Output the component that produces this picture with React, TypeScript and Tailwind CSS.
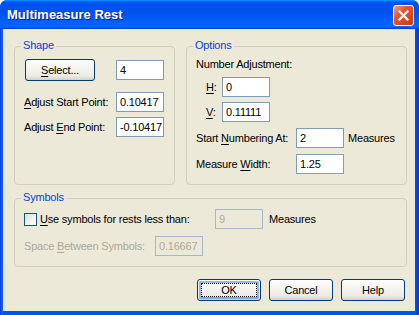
import React from "react";

function U({ children }: { children: React.ReactNode }) {
  return <span className="underline underline-offset-[2px] decoration-[1px]">{children}</span>;
}

function Field({ value, disabled = false, className = "" }: { value: string; disabled?: boolean; className?: string }) {
  return (
    <div
      className={`h-[20px] w-[48px] shrink-0 border flex items-center pl-[3px] ${
        disabled ? "border-[#A7B8CB] bg-[#ECE9D8] text-[#ACA899]" : "border-[#7F9DB9] bg-white text-black"
      } ${className}`}
    >
      {value}
    </div>
  );
}

function Group({ title, className = "", children }: { title: string; className?: string; children: React.ReactNode }) {
  return (
    <div className={`relative border border-[#D0D0BF] rounded-[4px] ${className}`}>
      <span className="absolute left-[6px] top-[-8px] bg-[#ECE9D8] px-[2px] text-[#0046D5] leading-[13px]">{title}</span>
      {children}
    </div>
  );
}

function Btn({ children, def = false, className = "" }: { children: React.ReactNode; def?: boolean; className?: string }) {
  return (
    <div
      className={`relative flex items-center justify-center border border-[#003C74] rounded-[3px] bg-[linear-gradient(180deg,#ffffff_0%,#f5f4ef_40%,#ecebe5_80%,#d6d0c5_100%)] ${className}`}
    >
      {def && (
        <div className="absolute inset-[1px] rounded-[2px] border-[2px] border-[#9DB4E6] border-b-[#8AA3DB]" />
      )}
      {def && <div className="absolute inset-[3px] border border-dotted border-black" />}
      <span className="relative">{children}</span>
    </div>
  );
}

export default function App() {
  return (
    <div className="w-[419px] h-[315px] flex flex-col bg-[linear-gradient(90deg,#0831D9_0px,#166AEE_2px,#0055EA_3px,#0055EA_calc(100%-4px),#0831D9_100%)] rounded-t-[7px] overflow-hidden font-['Liberation_Sans',Arial,sans-serif] text-[11px] leading-[13px] text-black">
      {/* Title bar */}
      <div className="h-[29px] shrink-0 flex items-start justify-between bg-[linear-gradient(180deg,#0997ff,#0053ee_8%,#0050ee_40%,#0066ff_88%,#0066ff_93%,#005bff_95%,#003dd7_96%,#003dd7)]">
        <div className="pl-[7px] pt-[7px] text-white font-bold text-[13px] leading-[16px] [text-shadow:1px_1px_0_#0A1883]">
          Multimeasure Rest
        </div>
        <div className="mt-[5px] mr-[5px] w-[21px] h-[21px] rounded-[3px] border border-white bg-[linear-gradient(135deg,#F4A085_0%,#E45932_35%,#C73A12_100%)] flex items-center justify-center">
          <svg width="11" height="11" viewBox="0 0 11 11">
            <path d="M1.5 1.5 L9.5 9.5 M9.5 1.5 L1.5 9.5" stroke="white" strokeWidth="2.2" strokeLinecap="square" />
          </svg>
        </div>
      </div>

      {/* Body */}
      <div className="flex-1 ml-[3px] mr-[4px] mb-[4px] bg-[#ECE9D8] pt-[17px] pl-[11px] pr-[8px] flex flex-col tracking-[-0.2px]">
        <div className="flex gap-[11px] h-[139px]">
          <Group title="Shape" className="w-[161px]">
            <div className="pt-[12px] pl-[10px] flex flex-col">
              <div className="flex items-start">
                <Btn className="w-[70px] h-[22px]">
                  <U>S</U>elect...
                </Btn>
                <Field value="4" className="ml-[21px] mt-[1px]" />
              </div>
              <div className="flex items-center mt-[11px]">
                <div className="w-[91px] -ml-[1px] pl-0">
                  <U>A</U>djust Start Point:
                </div>
                <Field value="0.10417" className="ml-[1px]" />
              </div>
              <div className="flex items-center mt-[5px]">
                <div className="w-[91px] -ml-[1px]">
                  Adjust <U>E</U>nd Point:
                </div>
                <Field value="-0.10417" className="ml-[1px]" />
              </div>
            </div>
          </Group>

          <Group title="Options" className="w-[221px]">
            <div className="pt-[11px] pl-[9px] flex flex-col">
              <div>Number Adjustment:</div>
              <div className="flex items-center mt-[6px] pl-[10px]">
                <div className="w-[16px]">
                  <U>H</U>:
                </div>
                <Field value="0" />
              </div>
              <div className="flex items-center mt-[5px] pl-[10px]">
                <div className="w-[16px]">
                  <U>V</U>:
                </div>
                <Field value="0.11111" />
              </div>
              <div className="flex items-center mt-[6px]">
                <div className="w-[100px]">
                  Start <U>N</U>umbering At:
                </div>
                <Field value="2" />
                <div className="ml-[4px]">Measures</div>
              </div>
              <div className="flex items-center mt-[6px]">
                <div className="w-[100px]">
                  Measure <U>W</U>idth:
                </div>
                <Field value="1.25" />
              </div>
            </div>
          </Group>
        </div>

        <Group title="Symbols" className="mt-[13px] h-[69px] w-[393px]">
          <div className="pt-[10px] pl-[9px] flex flex-col">
            <div className="flex items-center">
              <div className="w-[13px] h-[13px] border border-[#1C5180] bg-[linear-gradient(135deg,#DCDCD7_0%,#F4F4F1_60%,#ffffff_100%)]" />
              <div className="ml-[3px] w-[175px]">
                <U>U</U>se symbols for rests less than:
              </div>
              <Field value="9" disabled />
              <div className="ml-[6px]">Measures</div>
            </div>
            <div className="flex items-center mt-[7px]">
              <div className="w-[131px] text-[#ACA899]">
                Space <U>B</U>etween Symbols:
              </div>
              <Field value="0.16667" disabled />
            </div>
          </div>
        </Group>

        <div className="flex justify-end gap-[8px] mt-[12px] pr-[2px]">
          <Btn def className="w-[64px] h-[22px]">OK</Btn>
          <Btn className="w-[64px] h-[22px]">Cancel</Btn>
          <Btn className="w-[64px] h-[22px]">Help</Btn>
        </div>
      </div>
    </div>
  );
}
